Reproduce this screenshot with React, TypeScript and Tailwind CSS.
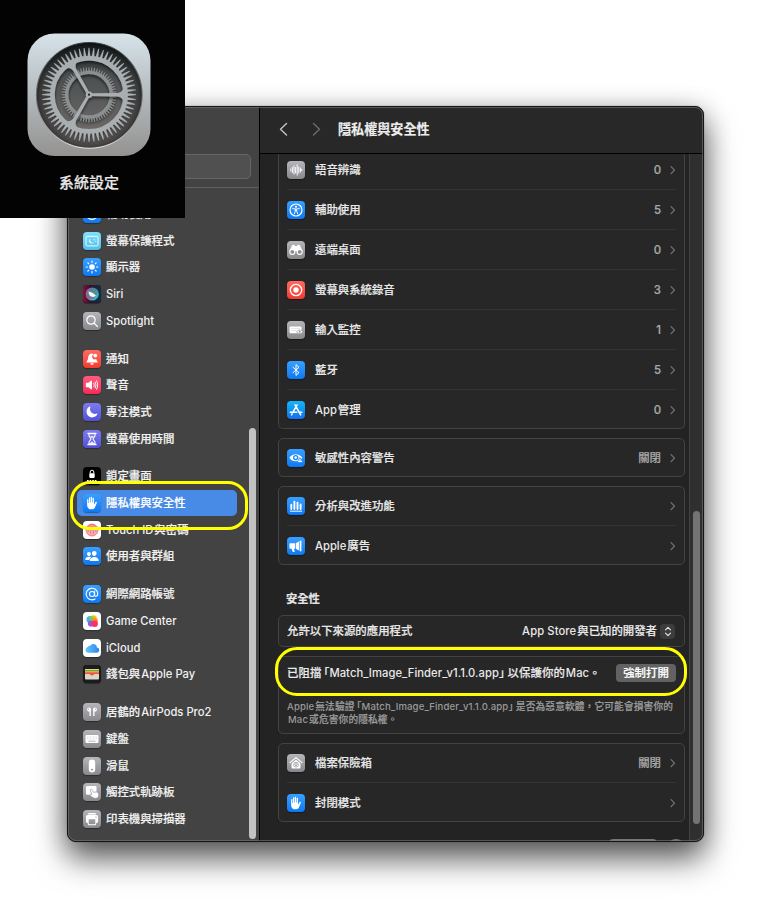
import React from "react";
import { IoHandLeft, IoPeople, IoMoon, IoVolumeHigh, IoPrint } from "react-icons/io5";

const glyphs: Record<string, React.ReactNode> = {
  wallpaper: (
    <g fill="none" stroke="white" strokeWidth="1.3">
      <circle cx="9" cy="9" r="5.5" />
      <circle cx="9" cy="9" r="2" />
    </g>
  ),
  saver: (
    <g>
      <rect x="3" y="4.3" width="12" height="9.6" rx="1.2" fill="none" stroke="white" strokeWidth="0.9" />
      <path d="M7.6 6.6a2.6 2.6 0 1 0 3.4 3.6 2.5 2.5 0 0 1-3.4-3.6z" fill="white" />
      <circle cx="11.2" cy="7.7" r=".6" fill="white" />
      <circle cx="12.6" cy="9.2" r=".5" fill="white" />
    </g>
  ),
  sun: (
    <g>
      <circle cx="9" cy="9" r="2.8" fill="white" />
      {[0, 45, 90, 135, 180, 225, 270, 315].map((a) => (
        <path key={a} d="M9 3.1v1.3" stroke="white" strokeWidth="1.1" strokeLinecap="round" transform={`rotate(${a} 9 9)`} />
      ))}
    </g>
  ),
  siri: (
    <g>
      <defs>
        <linearGradient id="siriBack" x1="0" x2="1">
          <stop offset="0" stopColor="#8d0f3c" />
          <stop offset=".4" stopColor="#2a1430" />
          <stop offset="1" stopColor="#0f2f4a" />
        </linearGradient>
        <linearGradient id="siriA" x1="0" y1="0" x2="1" y2="1">
          <stop offset="0" stopColor="#c9489a" />
          <stop offset=".4" stopColor="#5b7d9c" />
          <stop offset=".75" stopColor="#2cc3c4" />
          <stop offset="1" stopColor="#3b6fe0" />
        </linearGradient>
      </defs>
      <rect width="18" height="18" rx="4" fill="url(#siriBack)" />
      <circle cx="9.2" cy="9" r="6.6" fill="url(#siriA)" />
      <circle cx="10" cy="7.6" r="4.4" fill="#4f8f8c" opacity=".8" />
      <path d="M5.500 6.500c2.500 .2 5 1.600 7.500 4.300-2 1.700-4.500 1.300-6 0C6 9.800 5.800 8.500 5.500 6.500z" fill="white" opacity=".95" />
      <path d="M4.500 11.500c2 1.800 4.500 2.200 7 1" stroke="#e23c74" strokeWidth="1.2" fill="none" />
    </g>
  ),
  search: (
    <g fill="none" stroke="white" strokeWidth="1.2" strokeLinecap="round">
      <circle cx="8" cy="8" r="4.2" />
      <path d="M11.100 11.100l3.400 3.400" />
    </g>
  ),
  bell: (
    <g fill="white">
      <path d="M9.300 3.500c-2.800 0-4 1.800-4.200 4-.2 2.200-.5 2.800-1.300 3.700-.5.600-.3 1.300.5 1.300h9.500c.8 0 1-.7.500-1.300-.6-.7-.9-1.200-1.100-2.100a2.700 2.700 0 0 1-2.500-4.900z" />
      <path d="M7.300 13.200h3.500c-.3 1-.9 1.500-1.750 1.500s-1.500-.5-1.750-1.500z" />
      <circle cx="12.300" cy="5.600" r="1.900" />
    </g>
  ),
  sound: <IoVolumeHigh x="2" y="2" size={14} color="white" />,
  moon: <IoMoon x="2.700" y="2.700" size={12.5} color="white" />,
  hourglass: (
    <g fill="none" stroke="white" strokeLinejoin="round">
      <path d="M5 3.500h8M5 14.500h8" strokeWidth="1.4" strokeLinecap="round" />
      <path d="M6 4v1.600C6 7.200 7.900 8 7.900 9S6 10.800 6 12.400V14h6v-1.600C12 10.800 10.100 10 10.100 9S12 7.200 12 5.600V4" strokeWidth="1.1" />
      <path d="M7.500 6.200h3L9 8zM7 13.600l2-2.200 2 2.200z" fill="white" strokeWidth=".4" />
    </g>
  ),
  lock: (
    <g>
      <rect x="6.300" y="6.300" width="5.400" height="4.600" rx=".8" fill="white" />
      <path d="M7.200 6.500V5a1.800 1.800 0 0 1 3.600 0v1.500" fill="none" stroke="white" strokeWidth="1" />
      <path d="M4 13.800h10" stroke="white" strokeWidth="1.7" strokeDasharray="1.7 .9" />
    </g>
  ),
  hand: <IoHandLeft x="2.500" y="2.500" size={13} color="white" />,
  touch: (
    <g fill="none" stroke="#ee6f7d" strokeWidth=".9">
      <circle cx="9" cy="9" r="6" fill="#f5b0b6" />
      <path d="M5 11c.8-5 1.800-6 4-6s4 2 3.800 6M7 13c.9-2 .5-5.500 2-5.500s1.800 2.500 1 6M4 8c1-3 3-4.500 5-4.500S13 5 14 8" />
    </g>
  ),
  people: <IoPeople x="1.800" y="1.800" size={14.4} color="white" />,
  at: (
    <g fill="none" stroke="white" strokeWidth="1.1" strokeLinecap="round">
      <circle cx="9" cy="9" r="2.500" />
      <path d="M11.600 6.400v3.600c0 2.100 3.200 1.700 3.200-1.200A5.800 5.800 0 1 0 12 14" />
    </g>
  ),
  game: (
    <g>
      <circle cx="7" cy="7.500" r="3.500" fill="#37b3f0" />
      <circle cx="10.500" cy="6.500" r="3.300" fill="#f6c31d" />
      <circle cx="8.600" cy="6.800" r="2.600" fill="#79cf45" />
      <circle cx="12.200" cy="8.500" r="2.600" fill="#fd8c24" />
      <circle cx="8" cy="11.500" r="3.100" fill="#9b52e6" />
      <circle cx="11.700" cy="11.800" r="3.200" fill="#fb3361" />
    </g>
  ),
  cloud: (
    <g>
      <defs>
        <linearGradient id="cloudA" x1="0" x2="1">
          <stop offset="0" stopColor="#67c5fa" />
          <stop offset="1" stopColor="#2c86ec" />
        </linearGradient>
      </defs>
      <path d="M5 13.800a2.900 2.900 0 0 1-.3-5.700A2.500 2.500 0 0 1 7 6.700a3.800 3.800 0 0 1 7 1.800 2.700 2.700 0 0 1 .2 5.300z" fill="url(#cloudA)" />
    </g>
  ),
  wallet: (
    <g>
      <rect width="18" height="18" rx="4" fill="#1c1c1c" />
      <rect x="2" y="4" width="14" height="10.500" rx="1" fill="#d9d6cc" />
      <path d="M2 4h14v2H2z" fill="#ecd7a4" />
      <path d="M2 4.900h14v1.600H2z" fill="#69ad38" />
      <path d="M2 6.400h14V8H2z" fill="#f5a72b" />
      <path d="M2 7.500h14v1.400h-4.500c-.6 0-.8 1.500-2.500 1.500S7.100 8.900 6.500 8.900H2z" fill="#ec5147" />
    </g>
  ),
  airpods: (
    <g fill="white">
      <path d="M4 6.500c0-1.200 1-1.900 2-1.900 1.300 0 2 .8 2 1.900 0 .7-.2 1-.2 1.500v5H6.500V8.600C5 8.700 4 7.800 4 6.500zM14 6.500c0-1.200-1-1.900-2-1.900-1.300 0-2 .8-2 1.900 0 .7.2 1 .2 1.500v5h1.300V8.600c1.500.1 2.500-.8 2.500-2.100z" />
      <circle cx="5.300" cy="6.300" r=".7" fill="#aaaaad" />
      <circle cx="12.700" cy="6.300" r=".7" fill="#aaaaad" />
    </g>
  ),
  keyboard: (
    <g>
      <rect x="2.500" y="5" width="13" height="8" rx="1.300" fill="white" />
      <path d="M4 7h10M4 9h10" stroke="#d2d2d5" strokeWidth=".8" strokeDasharray="1 .5" />
      <path d="M5.500 11.200h7" stroke="#aaaaae" strokeWidth=".9" />
    </g>
  ),
  mouse: (
    <g>
      <rect x="5.800" y="2.600" width="6.400" height="12.800" rx="3.200" fill="white" />
      <circle cx="9" cy="12.600" r=".9" fill="#77777a" />
    </g>
  ),
  trackpad: (
    <g>
      <rect x="3" y="3" width="10.500" height="8.800" rx="1.200" fill="white" />
      <path d="M7.700 6.300c.7-.4 1.300.2 1.700 1l1.100 2 2.700-.3c1.500-.1 2.600 1.300 2.600 2.900 0 1.900-1.400 3.400-3.400 3.400-2.300 0-3.500-1.600-5.300-2.800-.7-.5-.3-1.300.6-1.300l1.300.2-1.700-3.700c-.2-.6-.1-1.100.4-1.400z" fill="white" stroke="#96969a" strokeWidth=".7" />
    </g>
  ),
  printer: <IoPrint x="1.500" y="1.700" size={15} color="white" />,
  wave: (
    <path d="M3.800 8v2M5.400 6.500v5M7 4.800v8.400M8.600 6.500v5.500M10.200 3.800v10.400M11.800 6v6M13.400 7v4M14.700 8.300v1.400" stroke="white" strokeWidth=".95" strokeLinecap="round" />
  ),
  access: (
    <g fill="none" stroke="white" strokeLinecap="round" strokeLinejoin="round">
      <circle cx="9" cy="9" r="6" strokeWidth="1.2" />
      <circle cx="9" cy="5.700" r="1.050" fill="white" stroke="none" />
      <path d="M5.700 7.600L8.200 8h1.600l2.500-.4M7.300 13l1.100-3.300h1.200l1.100 3.300" strokeWidth=".9" />
      <path d="M8.500 8.300h1v1.300h-1z" fill="white" strokeWidth=".8" />
    </g>
  ),
  binoculars: (
    <g>
      <path d="M5.700 4c1.200-.5 2 .1 2.200 1.100h2.200c.2-1 1-1.600 2.200-1.100.7.300.9.800 1.200 1.600l1.900 4.700H2.600l1.900-4.700c.3-.8.500-1.300 1.200-1.600z" fill="white" />
      <circle cx="5.300" cy="10.900" r="2.500" fill="#8d8d91" stroke="white" strokeWidth="1.1" />
      <circle cx="12.700" cy="10.900" r="2.500" fill="#8d8d91" stroke="white" strokeWidth="1.1" />
    </g>
  ),
  record: (
    <g>
      <circle cx="9" cy="9" r="5.700" fill="none" stroke="white" strokeWidth="1.3" />
      <circle cx="9" cy="9" r="2.700" fill="white" />
    </g>
  ),
  input: (
    <g>
      <rect x="2.500" y="5.500" width="12" height="6.800" rx="1.200" fill="white" />
      <path d="M4 7.500h9M4 9.500h5" stroke="#d5d5d8" strokeWidth=".6" />
      <path d="M9.500 10.800c1.600-2.500 4.800-2.500 6.400 0-1.600 2.500-4.800 2.500-6.400 0z" fill="white" stroke="#929297" strokeWidth=".7" />
      <circle cx="12.700" cy="10.800" r="1" fill="#929297" />
    </g>
  ),
  bluetooth: <path d="M6 6.300l6 5.400L9 14.400V3.600l3 2.700-6 5.400" fill="none" stroke="white" strokeWidth="1" strokeLinejoin="round" strokeLinecap="round" />,
  appstore: (
    <g stroke="white" strokeWidth="1.5" strokeLinecap="round" fill="none">
      <path d="M10.100 3.900L6.200 10.700M8 3.900l5.700 10M3.200 11.300h6.700M12.900 11.300h1.900M4.600 13.800l.5-.9" />
    </g>
  ),
  eye: (
    <g>
      <path d="M2.300 8.700c2.700-4.700 10.300-4.700 13 0-2.700 4.700-10.300 4.700-13 0z" fill="white" />
      <circle cx="8.700" cy="8.600" r="2.700" fill="#1987f6" />
      <circle cx="8.700" cy="8.600" r="1.300" fill="white" />
      <path d="M13 8.500l3 5h-6z" fill="white" stroke="#1987f6" strokeWidth=".8" strokeLinejoin="round" />
      <path d="M13 10.300v1.500" stroke="#1987f6" strokeWidth=".7" />
    </g>
  ),
  chart: (
    <g stroke="white">
      <path d="M4.300 12V7.600M7.400 12V4.600M10.500 12V5.600M13.600 12V7.400" strokeWidth="1.9" strokeLinecap="round" />
      <path d="M3 14.200h12" strokeWidth="1" />
    </g>
  ),
  horn: (
    <g fill="white">
      <path d="M12.300 4.200v9.600L8.800 11.700V6.300zM3.700 6.300h4.400v5.400H7l.7 2.500c.1.500-.2.800-.6.800H6.200c-.4 0-.6-.2-.7-.5L4.700 11.700h-1c-.8 0-1.300-.5-1.300-1.300V7.600c0-.8.5-1.300 1.300-1.300z" />
      <rect x="12.900" y="3.500" width="1.500" height="11" rx=".75" />
    </g>
  ),
  vault: (
    <g fill="none" stroke="white">
      <path d="M3 8.600l6-5 6 5" strokeWidth="1.2" strokeLinecap="round" strokeLinejoin="round" />
      <path d="M4.600 9.200v4.300c0 .7.400 1 1 1h6.800c.6 0 1-.3 1-1V9.200L9 5.800z" fill="white" stroke="none" />
      <circle cx="9" cy="10.600" r="2.400" stroke="#98989c" strokeWidth=".8" />
      <circle cx="9" cy="10.600" r="1" stroke="#98989c" strokeWidth=".8" />
    </g>
  ),
};

const tones = {
  blue: "bg-linear-to-b from-[#38a0ff] to-[#0a78f4]",
  cyan: "bg-linear-to-b from-[#7ee0fb] to-[#4fbfe9]",
  gray: "bg-linear-to-b from-[#b6b6ba] to-[#89898d]",
  red: "bg-linear-to-b from-[#ff6a60] to-[#f5392f]",
  pink: "bg-linear-to-b from-[#ff5a80] to-[#f52a58]",
  purple: "bg-linear-to-b from-[#7e7bf0] to-[#5350d6]",
  black: "bg-black",
  white: "bg-white",
  app: "bg-linear-to-b from-[#18b4f8] to-[#1670ee]",
};
type Tone = keyof typeof tones;

function AppIcon({ glyph, tone }: { glyph: string; tone: Tone }) {
  return (
    <span className={`block size-[18px] shrink-0 rounded-[4px] shadow-[0_1px_1px_rgba(0,0,0,0.35)] ${tones[tone]}`}>
      <svg viewBox="0 0 18 18" className="block size-[18px]">{glyphs[glyph]}</svg>
    </span>
  );
}

type Item = { glyph: string; tone: Tone; label: React.ReactNode; active?: boolean };
const gap = <span className="inline-block w-px" />;
const L = ({ children }: { children: React.ReactNode }) => <span className="text-[0.985em] [-webkit-text-stroke:0]">{children}</span>;
const Open = () => <span className="ml-[0.2em] [font-feature-settings:'halt']">「</span>;
const Close = () => <span className="mr-[0.25em] [font-feature-settings:'halt']">」</span>;

const groups: Item[][] = [
  [
    { glyph: "wallpaper", tone: "blue", label: "輔助使用" },
    { glyph: "saver", tone: "cyan", label: "螢幕保護程式" },
    { glyph: "sun", tone: "blue", label: "顯示器" },
    { glyph: "siri", tone: "black", label: <L>Siri</L> },
    { glyph: "search", tone: "gray", label: <L>Spotlight</L> },
  ],
  [
    { glyph: "bell", tone: "red", label: "通知" },
    { glyph: "sound", tone: "pink", label: "聲音" },
    { glyph: "moon", tone: "purple", label: "專注模式" },
    { glyph: "hourglass", tone: "purple", label: "螢幕使用時間" },
  ],
  [
    { glyph: "lock", tone: "black", label: "鎖定畫面" },
    { glyph: "hand", tone: "blue", label: "隱私權與安全性", active: true },
    { glyph: "touch", tone: "white", label: <><L>Touch ID</L>{gap}與密碼</> },
    { glyph: "people", tone: "blue", label: "使用者與群組" },
  ],
  [
    { glyph: "at", tone: "blue", label: "網際網路帳號" },
    { glyph: "game", tone: "white", label: <L>Game Center</L> },
    { glyph: "cloud", tone: "white", label: <L>iCloud</L> },
    { glyph: "wallet", tone: "black", label: <>錢包與{gap}<L>Apple Pay</L></> },
  ],
  [
    { glyph: "airpods", tone: "gray", label: <>居鶴的{gap}<L>AirPods Pro2</L></> },
    { glyph: "keyboard", tone: "gray", label: "鍵盤" },
    { glyph: "mouse", tone: "gray", label: "滑鼠" },
    { glyph: "trackpad", tone: "gray", label: "觸控式軌跡板" },
    { glyph: "printer", tone: "gray", label: "印表機與掃描器" },
  ],
];

function Sidebar() {
  return (
    <aside className="relative flex w-[192px] shrink-0 flex-col border-r border-black bg-[#434343]">
      <div className="flex h-[81px] items-end border-b border-[#606060] px-2 pb-2">
        <div className="h-[25px] w-full rounded-[5px] border border-[#666] bg-[#505050]" />
      </div>
      <nav className="mt-[12.6px] flex flex-col gap-[11.33px] pr-[22px] pl-[9px]">
        {groups.map((items, g) => (
          <div key={g} className="flex flex-col">
            {items.map((it, i) => (
              <div
                key={i}
                className={`flex h-[26.67px] items-center gap-[5px] rounded-[5px] pl-[6px] text-[#f1f1f1] ${it.active ? "bg-[#478be6] text-white" : ""}`}
              >
                <AppIcon glyph={it.glyph} tone={it.tone} />
                <span className="whitespace-nowrap">{it.label}</span>
              </div>
            ))}
          </div>
        ))}
      </nav>
      <div className="absolute top-[321px] right-[3px] h-[411px] w-[7px] rounded-full bg-[#c2c2c2]" />
    </aside>
  );
}

function Chevron() {
  return (
    <svg viewBox="0 0 6 10" className="h-[10px] w-[6px] shrink-0" fill="none" stroke="#757575" strokeWidth="1.2" strokeLinecap="round" strokeLinejoin="round">
      <path d="M1.100 1.700L4.500 5.200 1.100 8.700" />
    </svg>
  );
}

type RowProps = { glyph: string; tone: Tone; label: React.ReactNode; value?: string; last?: boolean; h?: string };
function Row({ glyph, tone, label, value, last, h = "h-[40px]" }: RowProps) {
  return (
    <div className={`flex ${h} items-center ${last ? "" : "border-b border-[#343434]"}`}>
      <AppIcon glyph={glyph} tone={tone} />
      <span className="ml-[10px] flex-1 text-[#e9e9e9]">{label}</span>
      <span className="mr-[9px] text-[#a9a9a9]">{value}</span>
      <Chevron />
    </div>
  );
}

function Card({ className, children }: { className: string; children: React.ReactNode }) {
  return <section className={`shrink-0 rounded-[5px] border border-[#434343] bg-[#272727] pr-[8px] pl-[8px] ${className}`}>{children}</section>;
}

function Main() {
  return (
    <main className="flex min-w-0 flex-1 flex-col bg-[#232323]">
      <header className="flex h-[47px] shrink-0 items-center border-b border-black bg-[#282828] pb-[2px] pl-[19px]">
        <svg viewBox="0 0 42 14" className="h-[14px] w-[42px]" fill="none" strokeWidth="1.4" strokeLinecap="round" strokeLinejoin="round">
          <path d="M7.500 1.500L1.500 7.300l6 5.800" stroke="#c4c4c4" />
          <path d="M34.500 1.500l6 5.800-6 5.800" stroke="#6b6b6b" />
        </svg>
        <h1 className="ml-[17px] text-[13.1px] font-bold text-[#ededed]">隱私權與安全性</h1>
      </header>
      <div className="relative flex min-h-0 flex-1 overflow-hidden">
        <div className="flex w-[430px] shrink-0 flex-col border-r border-[#424242] pr-[4px] pl-[18px]">
          <Card className="h-[275px] rounded-t-none border-t-0">
            <Row glyph="wave" tone="gray" label="語音辨識" value="0" h="h-[36px] pb-[3px]" />
            <Row glyph="access" tone="blue" label="輔助使用" value="5" />
            <Row glyph="binoculars" tone="gray" label="遠端桌面" value="0" />
            <Row glyph="record" tone="red" label="螢幕與系統錄音" value="3" />
            <Row glyph="input" tone="gray" label="輸入監控" value="1" />
            <Row glyph="bluetooth" tone="blue" label="藍牙" value="5" />
            <Row glyph="appstore" tone="app" label={<><L>App</L>{gap}管理</>} value="0" last h="h-[39px]" />
          </Card>
          <Card className="mt-[9px] h-[39px]">
            <Row glyph="eye" tone="blue" label="敏感性內容警告" value="關閉" last h="h-[38px]" />
          </Card>
          <Card className="mt-[9px] h-[79px]">
            <Row glyph="chart" tone="blue" label="分析與改進功能" h="h-[39px]" />
            <Row glyph="horn" tone="blue" label={<><L>Apple</L>{gap}廣告</>} last h="h-[39px]" />
          </Card>
          <h2 className="mt-[25px] ml-[8px] h-[18px] shrink-0 text-[11.3px] leading-[18px] font-bold text-[#e6e6e6]">安全性</h2>
          <Card className="mt-[7px] flex h-[32px] items-center text-[#e9e9e9]">
            <span className="flex-1">允許以下來源的應用程式</span>
            <span className="whitespace-nowrap"><span className="tracking-[0.1px]"><L>App Store</L></span>{gap}與已知的開發者</span>
            <span className="ml-[3px] mr-px flex size-[15px] items-center justify-center rounded-[4px] bg-[#3c3c3c]">
              <svg viewBox="0 0 8 12" className="h-[11px] w-[8px]" fill="none" stroke="#e5e5e5" strokeWidth="1.3" strokeLinecap="round" strokeLinejoin="round">
                <path d="M1.300 4.200L4 1.500l2.700 2.700M1.300 7.800L4 10.500l2.700-2.700" />
              </svg>
            </span>
          </Card>
          <Card className="mt-[9px] h-[78px]">
            <div className="flex h-[32px] items-center justify-between whitespace-nowrap text-[#e9e9e9]">
              <span className="flex tracking-[0.06px]">
                已阻擋<Open /><L>Match_Image_Finder_v1.1.0.app</L><Close />以保護你的{gap}<L>Mac</L><span className="w-[11px]">。</span>
              </span>
              <span className="flex h-[18px] w-[60px] items-center justify-center rounded-[4px] bg-[#626262] text-white">強制打開</span>
            </div>
            <div className="mt-[11px] text-[9.7px] leading-[13px] font-medium tracking-[0.14px] whitespace-nowrap text-[#9b9b9b]">
              <div className="flex"><L>Apple</L>{gap}無法驗證<Open /><L>Match_Image_Finder_v1.1.0.app</L><Close />是否為惡意軟體，它可能會損害你的</div>
              <div className="flex pl-px"><L>Mac</L>{gap}或危害你的隱私權。</div>
            </div>
          </Card>
          <Card className="mt-[9px] h-[79px]">
            <Row glyph="vault" tone="gray" label="檔案保險箱" value="關閉" h="h-[39px]" />
            <Row glyph="hand" tone="blue" label="封閉模式" last h="h-[39px]" />
          </Card>
          <div className="mt-[17px] flex justify-end gap-[10px]">
            <span className="h-[18px] w-[48px] rounded-[4px] bg-[#777]" />
            <span className="size-[18px] rounded-full bg-[#777]" />
          </div>
        </div>
        <div className="flex-1 bg-[#2f2f2f]" />
        <div className="absolute top-[357px] right-[3px] h-[313px] w-[7px] rounded-full bg-[#737373]" />
      </div>
    </main>
  );
}

// Teeth standing outward from radius r, evenly spread round the circle.
function teeth(r: number, count: number, outer: number, w: number) {
  return Array.from({ length: count }, (_, i) => (
    <path key={i} d={`M${-w} ${-r}L-.4 ${-outer}h.8L${w} ${-r}z`} transform={`rotate(${(i * 360) / count})`} />
  ));
}

function SettingsIcon() {
  return (
    <svg viewBox="27 33 124 124" className="size-[124px]">
      <defs>
        <linearGradient id="plate" x1="0" y1="0" x2="0" y2="1">
          <stop offset="0" stopColor="#d6e3e9" />
          <stop offset=".5" stopColor="#b4babd" />
          <stop offset="1" stopColor="#949291" />
        </linearGradient>
        <linearGradient id="well" x1="0" y1="0" x2="0" y2="1">
          <stop offset="0" stopColor="#1a2022" />
          <stop offset=".3" stopColor="#4b4e4f" />
          <stop offset="1" stopColor="#777270" />
        </linearGradient>
        <linearGradient id="rim" x1="0" y1="0" x2="0" y2="1">
          <stop offset="0" stopColor="#414a4e" />
          <stop offset=".6" stopColor="#777" />
          <stop offset="1" stopColor="#dedede" />
        </linearGradient>
        <radialGradient id="vignette">
          <stop offset=".8" stopColor="#000" stopOpacity="0" />
          <stop offset="1" stopColor="#000" stopOpacity=".5" />
        </radialGradient>
        <filter id="drop" x="-20%" y="-20%" width="140%" height="140%">
          <feDropShadow dx="0" dy="2" stdDeviation="1.600" floodColor="#000" floodOpacity=".6" />
        </filter>
      </defs>
      <rect x="27.500" y="33.500" width="123" height="122.500" rx="27" fill="url(#plate)" />
      <circle cx="89.300" cy="95.300" r="52.800" fill="url(#well)" stroke="url(#rim)" strokeWidth="1.2" />
      <circle cx="89.300" cy="95.300" r="52.500" fill="url(#vignette)" />
      <g transform="translate(89 94.700)">
        <g fill="#8b8f90" filter="url(#drop)">
          <circle r="22.300" fill="none" stroke="#8b8f90" strokeWidth="3.4" />
          {teeth(23.5, 60, 27.5, 0.8)}
        </g>
        <g fill="#a9afb1" filter="url(#drop)">
          {teeth(38, 60, 47, 1.35)}
          <circle r="36.600" fill="none" stroke="#a9afb1" strokeWidth="4.6" />
          {[90, 210, 330].map((a) => (
            <path key={a} transform={`rotate(${a})`} d="M-1.400 0L-1.800-28C-2.100-32-4-34-8-34.500L-7-37H7L8-34.500C4-34 2.100-32 1.800-28L1.400 0z" />
          ))}
          <circle r="3.200" />
        </g>
        <circle r="1.100" fill="#202425" />
      </g>
    </svg>
  );
}

export default function App() {
  return (
    <div className="relative h-[903px] w-[764px] overflow-hidden bg-white pt-[106px] pl-[67px] font-['Inter','Noto_Sans_CJK_TC',sans-serif] text-[11.4px] leading-[18px] font-medium [-webkit-text-stroke:0.2px] [text-autospace:no-autospace]">
      <div className="flex h-[736px] w-[637px] overflow-hidden rounded-[9px] border border-[#161616] bg-[#232323] shadow-[0_0_1px_rgba(0,0,0,0.7),0_17px_32px_rgba(0,0,0,0.6),0_4px_26px_rgba(0,0,0,0.24)]">
        <Sidebar />
        <Main />
      </div>
      <div className="pointer-events-none absolute top-[107px] left-[68px] h-[734px] w-[635px] rounded-[8px] border border-[#777] opacity-60" />
      <div className="absolute top-0 left-0 flex h-[218px] w-[185px] flex-col items-center bg-[#030303] pt-[33px] pr-[7px]">
        <SettingsIcon />
        <div className="mt-[15px] text-[15px] leading-[22px] font-medium text-[#e8e8e8]">系統設定</div>
      </div>
      <div className="absolute top-[481px] left-[70px] h-[49px] w-[178px] rounded-[20px] border-3 border-[#ffff00]" />
      <div className="absolute top-[647px] left-[275px] h-[49px] w-[412px] rounded-[22px] border-3 border-[#ffff00]" />
    </div>
  );
}
